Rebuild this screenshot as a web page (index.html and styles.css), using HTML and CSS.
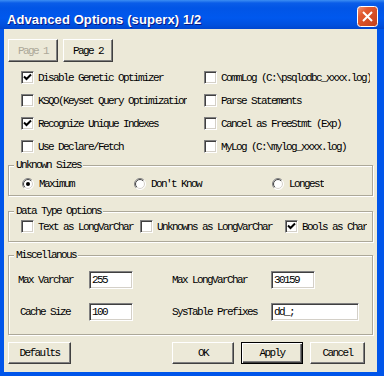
FILE: index.html
```html
<!DOCTYPE html>
<html lang="en">
<head>
    <meta charset="UTF-8">
    <title>Advanced Options (superx) 1/2</title>
    <link rel="stylesheet" href="styles.css">
</head>
<body>
    <svg class="defs" width="0" height="0">
        <defs>
            <linearGradient id="ringOuter" x1="0" y1="0" x2="1" y2="1">
                <stop offset="0.45" stop-color="#808080"/>
                <stop offset="0.55" stop-color="#ffffff"/>
            </linearGradient>
            <linearGradient id="ringInner" x1="0" y1="0" x2="1" y2="1">
                <stop offset="0.45" stop-color="#404040"/>
                <stop offset="0.55" stop-color="#d4d0c8"/>
            </linearGradient>
        </defs>
    </svg>

    <div class="window">
        <div class="titlebar">
            <span class="title">Advanced Options (superx) 1/2</span>
            <svg class="close" width="21" height="21" viewBox="0 0 21 21">
                <defs>
                    <linearGradient id="closeFill" x1="0" y1="0" x2="1" y2="1">
                        <stop offset="0" stop-color="#f29a7c"/>
                        <stop offset="0.3" stop-color="#e25a30"/>
                        <stop offset="1" stop-color="#c4401a"/>
                    </linearGradient>
                </defs>
                <rect x="0.5" y="0.5" width="20" height="20" rx="3" fill="url(#closeFill)" stroke="#fff"/>
                <path d="M6 6 L15 15 M15 6 L6 15" stroke="#fff" stroke-width="2"/>
            </svg>
        </div>

        <div class="dialog">
            <!-- Page switcher -->
            <div class="pages">
                <button class="btn page" disabled>Page 1</button>
                <button class="btn page">Page 2</button>
            </div>

            <!-- Driver options -->
            <div class="options">
                <div class="opt"><span class="check"><svg width="9" height="9" viewBox="0 0 9 9"><path d="M1 3.5 L3.5 6 L8 1.5" fill="none" stroke="#000" stroke-width="2"/></svg></span>Disable Genetic Optimizer</div>
                <div class="opt"><span class="check"></span>CommLog (C:\psqlodbc_xxxx.log)</div>
                <div class="opt"><span class="check"></span>KSQO(Keyset Query Optimization)</div>
                <div class="opt"><span class="check"></span>Parse Statements</div>
                <div class="opt"><span class="check"><svg width="9" height="9" viewBox="0 0 9 9"><path d="M1 3.5 L3.5 6 L8 1.5" fill="none" stroke="#000" stroke-width="2"/></svg></span>Recognize Unique Indexes</div>
                <div class="opt"><span class="check"></span>Cancel as FreeStmt (Exp)</div>
                <div class="opt"><span class="check"></span>Use Declare/Fetch</div>
                <div class="opt"><span class="check"></span>MyLog (C:\mylog_xxxx.log)</div>
            </div>

            <fieldset class="group">
                <legend>Unknown Sizes</legend>
                <div class="radios">
                    <div class="opt size-max"><svg class="radio" width="12" height="12" viewBox="0 0 12 12"><circle cx="6" cy="6" r="5.5" fill="#fff" stroke="url(#ringOuter)"/><circle cx="6" cy="6" r="4.5" fill="#fff" stroke="url(#ringInner)"/><circle cx="6" cy="6" r="2" fill="#000"/></svg>Maximum</div>
                    <div class="opt size-dk"><svg class="radio" width="12" height="12" viewBox="0 0 12 12"><circle cx="6" cy="6" r="5.5" fill="#fff" stroke="url(#ringOuter)"/><circle cx="6" cy="6" r="4.5" fill="#fff" stroke="url(#ringInner)"/></svg>Don't Know</div>
                    <div class="opt"><svg class="radio" width="12" height="12" viewBox="0 0 12 12"><circle cx="6" cy="6" r="5.5" fill="#fff" stroke="url(#ringOuter)"/><circle cx="6" cy="6" r="4.5" fill="#fff" stroke="url(#ringInner)"/></svg>Longest</div>
                </div>
            </fieldset>

            <fieldset class="group types">
                <legend>Data Type Options</legend>
                <div class="datatypes">
                    <div class="opt type-text"><span class="check"></span>Text as LongVarChar</div>
                    <div class="opt type-unk"><span class="check"></span>Unknowns as LongVarChar</div>
                    <div class="opt"><span class="check"><svg width="9" height="9" viewBox="0 0 9 9"><path d="M1 3.5 L3.5 6 L8 1.5" fill="none" stroke="#000" stroke-width="2"/></svg></span>Bools as Char</div>
                </div>
            </fieldset>

            <fieldset class="group misc-group">
                <legend>Miscellanous</legend>
                <div class="misc">
                    <label for="maxVarchar">Max Varchar</label>
                    <input class="field short" id="maxVarchar" type="text" value="255">
                    <label for="maxLong">Max LongVarChar</label>
                    <input class="field short" id="maxLong" type="text" value="30159">
                    <label class="indent" for="cacheSize">Cache Size</label>
                    <input class="field short" id="cacheSize" type="text" value="100">
                    <label for="sysPrefix">SysTable Prefixes</label>
                    <input class="field long" id="sysPrefix" type="text" value="dd_;">
                </div>
            </fieldset>

            <div class="actions">
                <button class="btn defaults">Defaults</button>
                <span class="spacer"></span>
                <button class="btn ok">OK</button>
                <button class="btn ok default">Apply</button>
                <button class="btn cancel">Cancel</button>
            </div>
        </div>
    </div>
</body>
</html>
```

FILE: styles.css
```css
html, body {
    margin: 0;
    padding: 0;
}
body {
    width: 384px;
    height: 376px;
    overflow: hidden;
    background-color: #0055ea;
    font-family: "Liberation Mono", "DejaVu Sans Mono", monospace;
    font-size: 11px;
    letter-spacing: -1.6px;
    color: #000;
}
.defs {
    position: absolute;
}
.window {
    display: flex;
    flex-direction: column;
    height: 376px;
}
.titlebar {
    flex: none;
    height: 29px;
    box-sizing: border-box;
    display: flex;
    align-items: flex-start;
    justify-content: space-between;
    padding: 0 6px 0 7px;
    background: linear-gradient(#3c8ef3 0px, #0a5de8 3px, #0155e6 8px, #0058ee 18px, #0050de 25px, #0046cf 29px);
}
.title {
    padding-top: 12px;
    line-height: 15px;
    font-family: "Liberation Sans", Arial, sans-serif;
    font-size: 13px;
    font-weight: bold;
    letter-spacing: 0.1px;
    color: white;
    text-shadow: 1px 1px #0a1883;
}
.close {
    margin-top: 6px;
}
.dialog {
    flex: 1;
    display: flex;
    flex-direction: column;
    background-color: #ece9d8;
    border-style: solid;
    border-color: #0055ea;
    border-width: 0 7px 4px 4px;
}
.btn {
    box-sizing: border-box;
    height: 23px;
    padding: 0;
    font-family: inherit;
    font-size: 11px;
    letter-spacing: inherit;
    color: #000;
    background-color: #ece9d8;
    border: 1px solid;
    border-color: #fff #404040 #404040 #fff;
    box-shadow: inset -1px -1px #808080;
}
.btn:disabled {
    color: #aca899;
}
.pages {
    display: flex;
    gap: 5px;
    margin: 10px 0 0 4px;
}
.page {
    width: 50px;
}
.options {
    display: grid;
    grid-template-columns: 183px 166px;
    grid-auto-rows: 23px;
    margin: 4px 0 0 17px;
}
.opt {
    flex: none;
    display: flex;
    align-items: center;
    gap: 4px;
    white-space: nowrap;
    overflow: hidden;
}
.options .opt:nth-child(odd) {
    width: 166px;
}
.check {
    flex: none;
    box-sizing: border-box;
    width: 13px;
    height: 13px;
    display: flex;
    align-items: center;
    justify-content: center;
    background-color: #fff;
    border: 1px solid;
    border-color: #808080 #fff #fff #808080;
    box-shadow: inset 1px 1px #404040, inset -1px -1px #d4d0c8;
}
.radio {
    flex: none;
    margin-right: 1px;
}
.group {
    margin: 1px 4px 0;
    padding: 0;
    min-width: 0;
    border: 1px solid #aca899;
    box-shadow: inset 1px 1px #fff, 1px 1px #fff;
}
.group legend {
    margin-left: 5px;
    padding: 0 2px;
    line-height: 13px;
    background-color: #ece9d8;
}
.radios {
    display: flex;
    align-items: center;
    height: 23px;
    padding-left: 13px;
}
.size-max {
    width: 112px;
}
.size-dk {
    width: 138px;
}
.types {
    margin-top: 9px;
}
.datatypes {
    display: flex;
    align-items: center;
    height: 17px;
    margin-bottom: 6px;
    padding-left: 12px;
}
.type-text {
    width: 119px;
}
.type-unk {
    width: 145px;
}
.misc-group {
    margin-top: 7px;
}
.misc {
    display: grid;
    grid-template-columns: 71px 83px 99px auto;
    row-gap: 14px;
    align-items: center;
    padding: 9px 0 13px 9px;
}
.misc .indent {
    padding-left: 2px;
}
.field {
    box-sizing: border-box;
    height: 18px;
    padding: 0 2px;
    font-family: inherit;
    font-size: 11px;
    letter-spacing: inherit;
    color: #000;
    background-color: #fff;
    border: 1px solid;
    border-color: #808080 #fff #fff #808080;
    box-shadow: inset 1px 1px #404040, inset -1px -1px #d4d0c8;
    outline: none;
}
.short {
    width: 44px;
}
.long {
    width: 88px;
}
.actions {
    display: flex;
    gap: 7px;
    margin: 7px 12px 0 4px;
}
.actions .btn {
    height: 22px;
}
.spacer {
    flex: 1;
}
.defaults {
    width: 63px;
}
.ok {
    width: 62px;
}
.cancel {
    width: 55px;
}
.default {
    border-color: #000;
    box-shadow: inset 1px 1px #fff, inset -1px -1px #404040, inset -2px -2px #808080;
}
```
